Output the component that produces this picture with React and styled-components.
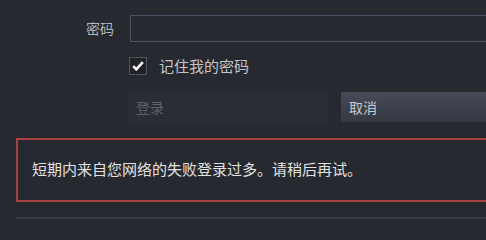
import styled, { createGlobalStyle } from 'styled-components'

const GlobalStyle = createGlobalStyle`
  html, body {
    margin: 0;
    padding: 0;
    background: #262930;
    overflow: hidden;
  }
  body {
    font-family: "Noto Sans CJK SC", "Noto Sans", "Liberation Sans", sans-serif;
  }
`

const Page = styled.div`
  width: 486px;
  height: 221px;
  overflow: hidden;
`

const Content = styled.div`
  width: 560px;
  padding: 15px 0 0 16px;
  box-sizing: border-box;
`

const Form = styled.div`
  display: grid;
  grid-template-columns: 98px 1fr;
  column-gap: 16px;
  align-items: center;
`

const Label = styled.label`
  text-align: right;
  font-size: 14px;
  color: #b4b6ba;
  line-height: 27px;
`

const TextInput = styled.input`
  height: 27px;
  box-sizing: border-box;
  border: 1px solid #4d5366;
  background: #262930;
  color: #ddd;
  outline: none;
  padding: 0 8px;
`

const CheckRow = styled.div`
  grid-column: 2;
  display: flex;
  align-items: center;
  gap: 12px;
  margin: 14px 0 0 -1px;
`

const Box = styled.span`
  width: 16px;
  height: 16px;
  border: 1px solid #54565c;
  background: #202227;
  display: flex;
  align-items: center;
  justify-content: center;
`

const CheckText = styled.span`
  font-size: 15px;
  color: #c4c5c8;
  line-height: 20px;
`

const Buttons = styled.div`
  grid-column: 2;
  display: flex;
  gap: 12px;
  margin: 16px 0 0 -2px;
`

const Button = styled.button`
  width: 201px;
  height: 30px;
  border: none;
  padding: 0 0 0 8px;
  text-align: left;
  font-family: inherit;
  font-size: 14px;
  background: ${p => (p.$primary ? 'linear-gradient(180deg, #454a57 0%, #363943 100%)' : '#2a2d34')};
  color: ${p => (p.$primary ? '#c9cacd' : '#5e626a')};
`

const ErrorBox = styled.div`
  margin-top: 16px;
  height: 64px;
  box-sizing: border-box;
  border: 2px solid #a83f41;
  border-right: none;
  display: flex;
  align-items: center;
  padding: 0 0 4px 14px;
  font-size: 15px;
  color: #e2e2e2;
`

const Divider = styled.div`
  margin-top: 15px;
  height: 2px;
  background: #3a3d46;
`

const Check = () => (
  <svg width="12" height="10" viewBox="0 0 12 10">
    <polyline points="1.2,5.2 4.3,8.3 10.8,1.2" fill="none" stroke="#fff" strokeWidth="2.6" />
  </svg>
)

export default function App() {
  return (
    <>
      <GlobalStyle />
      <Page>
        <Content>
          <Form>
            <Label>密码</Label>
            <TextInput type="password" />
            <CheckRow>
              <Box><Check /></Box>
              <CheckText>记住我的密码</CheckText>
            </CheckRow>
            <Buttons>
              <Button>登录</Button>
              <Button $primary>取消</Button>
            </Buttons>
          </Form>
          <ErrorBox>短期内来自您网络的失败登录过多。请稍后再试。</ErrorBox>
          <Divider />
        </Content>
      </Page>
    </>
  )
}
